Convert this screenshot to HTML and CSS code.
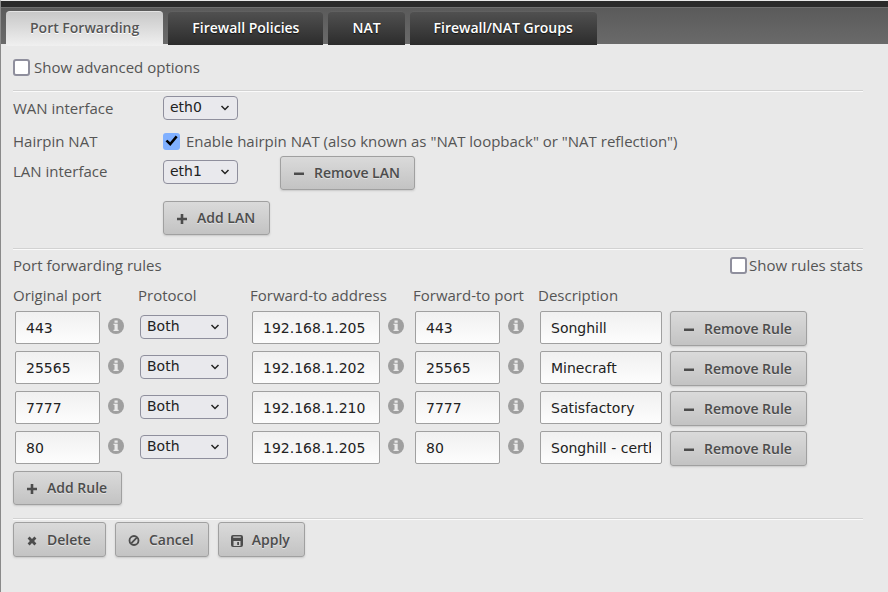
FILE: index.html
```
<!DOCTYPE html>
<html lang="en">
<head>
<meta charset="utf-8">
<title>Port Forwarding</title>
<link rel="stylesheet" href="styles.css">
</head>
<body>
<svg class="sprite" aria-hidden="true">
  <symbol id="minus" viewBox="0 0 12 12"><path d="M1 4.500h10v2.500H1z"/></symbol>
  <symbol id="plus" viewBox="0 0 12 12"><path d="M4.700 1h2.600v3.700H11v2.600H7.300V11H4.700V7.300H1V4.700h3.700z"/></symbol>
  <symbol id="cross" viewBox="0 0 12 12"><path d="M1.600 3.400 3.600 1.500 6 3.900l2.400-2.400 2 1.900L8.100 6l2.300 2.600-2 1.900L6 8.100l-2.400 2.400-2-1.900L3.900 6z"/></symbol>
  <symbol id="ban" viewBox="0 0 12 12"><circle cx="6" cy="5.500" r="4.500" fill="none" stroke="currentColor" stroke-width="1.800"/><path d="M3.200 8.300l5.600-5.600" stroke="currentColor" stroke-width="1.800"/></symbol>
  <symbol id="disk" viewBox="0 0 12 12"><path fill-rule="evenodd" d="M2 0h8q2 0 2 2v8q0 2-2 2H2q-2 0-2-2V2Q0 0 2 0zM2.200 1.500v1.200h7.600V1.500zM2.500 6v5h7V6zM6.200 7h1.800v3H6.200z"/></symbol>
  <symbol id="info" viewBox="0 0 16 16"><circle cx="8" cy="8" r="8" fill="#9f9f9f"/><path fill="#e9e9e9" d="M6.500 2.500h3.200v2.200H6.500zM5.500 5.700h4.200v6h1v1.300H5.500v-1.300h1V7h-1z"/></symbol>
  <symbol id="chevron" viewBox="0 0 10 10"><path d="M1.500 3 5 6.500 8.500 3" fill="none" stroke="#222" stroke-width="1.500"/></symbol>
</svg>
<header class="topbar">
  <nav class="tabs">
    <a class="tab active" href="#forwarding">Port Forwarding</a>
    <a class="tab" href="#policies">Firewall Policies</a>
    <a class="tab" href="#nat">NAT</a>
    <a class="tab" href="#groups">Firewall/NAT Groups</a>
  </nav>
</header>
<main class="content" id="forwarding">
  <section class="section options">
    <label class="check"><input type="checkbox">Show advanced options</label>
  </section>
  <section class="section interfaces">
    <label for="wan">WAN interface</label>
    <div><span class="select short"><select id="wan"><option>eth0</option></select><svg><use href="#chevron"/></svg></span></div>
    <span class="hairpin">Hairpin NAT</span>
    <label class="check spaced hairpin"><input type="checkbox" checked>Enable hairpin NAT (also known as "NAT loopback" or "NAT reflection")</label>
    <label class="lan-label" for="lan">LAN interface</label>
    <div class="lan">
      <span class="select short"><select id="lan"><option>eth1</option></select><svg><use href="#chevron"/></svg></span>
      <button class="button" type="button"><svg><use href="#minus"/></svg>Remove LAN</button>
    </div>
    <div class="add-lan"><button class="button" type="button"><svg><use href="#plus"/></svg>Add LAN</button></div>
  </section>
  <section class="section rules">
    <div class="rules-head">
      <span>Port forwarding rules</span>
      <label class="check"><input type="checkbox">Show rules stats</label>
    </div>
    <table>
      <colgroup><col class="col-port"><col class="col-protocol"><col class="col-address"><col class="col-port"><col class="col-description"><col class="col-action"></colgroup>
      <thead>
        <tr><th>Original port</th><th>Protocol</th><th>Forward-to address</th><th>Forward-to port</th><th>Description</th><td></td></tr>
      </thead>
      <tbody>
        <tr>
          <td><div class="field"><input class="port" aria-label="Original port" value="443"><svg><use href="#info"/></svg></div></td>
          <td><div class="field"><span class="select"><select aria-label="Protocol"><option>Both</option></select><svg><use href="#chevron"/></svg></span></div></td>
          <td><div class="field"><input class="address" aria-label="Forward-to address" value="192.168.1.205"><svg><use href="#info"/></svg></div></td>
          <td><div class="field"><input class="port" aria-label="Forward-to port" value="443"><svg><use href="#info"/></svg></div></td>
          <td><div class="field"><input class="description" aria-label="Description" value="Songhill"></div></td>
          <td><div class="field"><button class="button" type="button"><svg><use href="#minus"/></svg>Remove Rule</button></div></td>
        </tr>
        <tr>
          <td><div class="field"><input class="port" aria-label="Original port" value="25565"><svg><use href="#info"/></svg></div></td>
          <td><div class="field"><span class="select"><select aria-label="Protocol"><option>Both</option></select><svg><use href="#chevron"/></svg></span></div></td>
          <td><div class="field"><input class="address" aria-label="Forward-to address" value="192.168.1.202"><svg><use href="#info"/></svg></div></td>
          <td><div class="field"><input class="port" aria-label="Forward-to port" value="25565"><svg><use href="#info"/></svg></div></td>
          <td><div class="field"><input class="description" aria-label="Description" value="Minecraft"></div></td>
          <td><div class="field"><button class="button" type="button"><svg><use href="#minus"/></svg>Remove Rule</button></div></td>
        </tr>
        <tr>
          <td><div class="field"><input class="port" aria-label="Original port" value="7777"><svg><use href="#info"/></svg></div></td>
          <td><div class="field"><span class="select"><select aria-label="Protocol"><option>Both</option></select><svg><use href="#chevron"/></svg></span></div></td>
          <td><div class="field"><input class="address" aria-label="Forward-to address" value="192.168.1.210"><svg><use href="#info"/></svg></div></td>
          <td><div class="field"><input class="port" aria-label="Forward-to port" value="7777"><svg><use href="#info"/></svg></div></td>
          <td><div class="field"><input class="description" aria-label="Description" value="Satisfactory"></div></td>
          <td><div class="field"><button class="button" type="button"><svg><use href="#minus"/></svg>Remove Rule</button></div></td>
        </tr>
        <tr>
          <td><div class="field"><input class="port" aria-label="Original port" value="80"><svg><use href="#info"/></svg></div></td>
          <td><div class="field"><span class="select"><select aria-label="Protocol"><option>Both</option></select><svg><use href="#chevron"/></svg></span></div></td>
          <td><div class="field"><input class="address" aria-label="Forward-to address" value="192.168.1.205"><svg><use href="#info"/></svg></div></td>
          <td><div class="field"><input class="port" aria-label="Forward-to port" value="80"><svg><use href="#info"/></svg></div></td>
          <td><div class="field"><input class="description" aria-label="Description" value="Songhill - certbot"></div></td>
          <td><div class="field"><button class="button" type="button"><svg><use href="#minus"/></svg>Remove Rule</button></div></td>
        </tr>
      </tbody>
    </table>
    <button class="button" type="button"><svg><use href="#plus"/></svg>Add Rule</button>
  </section>
  <footer class="actions">
    <button class="button" type="button"><svg><use href="#cross"/></svg>Delete</button>
    <button class="button" type="button"><svg><use href="#ban"/></svg>Cancel</button>
    <button class="button" type="button"><svg><use href="#disk"/></svg>Apply</button>
  </footer>
</main>
</body>
</html>
```
FILE: styles.css
```
* { box-sizing: border-box; }

body {
  margin: 0;
  min-height: 100vh;
  border-top: 1px solid #e9e9e9;
  border-left: 1px solid #8a8a8a;
  background: #e9e9e9;
  color: #555;
  font: 15px/20px "Open Sans", sans-serif;
}

.sprite { display: none; }

.topbar {
  border-top: 6px solid #2a2a2a;
  background: linear-gradient(#5a5a5a, #6a6a6a);
  box-shadow: inset 0 1px #707070;
}

.tabs {
  display: flex;
  align-items: flex-start;
  gap: 5px;
  height: 37px;
  padding: 4px 5px 0;
}

.tab {
  height: 34px;
  padding: 0 24px;
  border-top: 1px solid #606060;
  border-radius: 4px 4px 0 0;
  background: linear-gradient(#505050, #2c2c2c);
  color: #fff;
  font-size: 14px;
  font-weight: 600;
  line-height: 32px;
  text-decoration: none;
  text-shadow: 0 1px 1px #111;
}

.tab.active {
  height: 35px;
  border-top-color: #e4e4e4;
  background: linear-gradient(#c8c8c8, #f0f0f0);
  color: #555;
  text-shadow: 0 1px #fff;
}

.content { padding: 0 25px 0 12px; }

.section {
  border-bottom: 1px solid #d2d2d2;
  box-shadow: 0 1px #fafafa;
}

.options { padding: 13px 0; }

.check {
  display: flex;
  align-items: center;
  gap: 4px;
}

.check.spaced { gap: 6px; }

input[type="checkbox"] {
  appearance: none;
  width: 17px;
  height: 17px;
  margin: 0;
  border: 2px solid #8f8f9d;
  border-radius: 3px;
  background: #fff;
}

input[type="checkbox"]:checked {
  border: 0;
  background: #80b0ff;
}

input[type="checkbox"]:checked::before {
  content: "";
  display: block;
  width: 17px;
  height: 17px;
  background: #000;
  clip-path: polygon(15% 52%, 26% 42%, 42% 57%, 75% 18%, 86% 28%, 43% 80%);
}

.interfaces {
  display: grid;
  grid-template-columns: 150px 1fr;
  padding: 5px 0 13px;
  line-height: 24px;
}

.hairpin {
  height: 36px;
  padding-top: 11px;
  line-height: 20px;
}

.check.hairpin { padding: 6px 0 0; }

.lan-label { padding-top: 3px; }

.lan {
  display: flex;
  align-items: flex-start;
  gap: 42px;
}

.lan .select { margin-top: 4px; }

.add-lan {
  display: flex;
  grid-column: 2;
  padding-top: 11px;
}

.select {
  display: grid;
  align-items: center;
  width: 88px;
}

.select.short { width: 75px; }

.select > * { grid-area: 1 / 1; }

.select select {
  appearance: none;
  width: 100%;
  height: 24px;
  padding: 0 6px 2px;
  border: 1px solid #8f8f9d;
  border-radius: 4px;
  background: #e9e9ed;
  color: #222;
  font: 14px/20px "DejaVu Sans", sans-serif;
}

.select svg {
  justify-self: end;
  width: 10px;
  height: 10px;
  margin-right: 8px;
  pointer-events: none;
}

.button {
  display: flex;
  align-items: center;
  gap: 9px;
  height: 34px;
  padding: 0 14px 0 12px;
  border: 1px solid #a0a0a0;
  border-radius: 3px;
  background: linear-gradient(#dadada, #c3c3c3);
  box-shadow: 0 1px 2px #c8c8c8;
  color: #4c4c4c;
  font: 600 14px/20px "Open Sans", sans-serif;
  text-shadow: 0 1px #e4e4e4;
  white-space: nowrap;
}

.field .button,
.actions .button { height: 35px; }

.button svg {
  width: 12px;
  height: 12px;
  margin-top: 2px;
  fill: currentColor;
}

.rules { padding: 6px 0 13px; }

.rules-head {
  display: flex;
  justify-content: space-between;
}

.rules-head .check { gap: 2px; }

table {
  table-layout: fixed;
  width: 792px;
  margin: 10px 0 1px;
  border-collapse: collapse;
}

.col-port { width: 125px; }
.col-protocol { width: 112px; }
.col-address { width: 163px; }
.col-description { width: 130px; }
.col-action { width: 137px; }

th, td { padding: 0; }

th {
  height: 25px;
  font-weight: 400;
  text-align: left;
  vertical-align: top;
  white-space: nowrap;
}

.field {
  display: flex;
  align-items: flex-start;
  gap: 8px;
  height: 40px;
  padding: 1px 0 0 2px;
}

.field > input {
  height: 33px;
  padding: 0 10px;
  border: 1px solid #a0a0a0;
  border-radius: 2px;
  background: linear-gradient(#f0f0f0, #fdfdfd);
  color: #222;
  font: 14px/20px "DejaVu Sans", sans-serif;
}

.field > svg {
  width: 16px;
  height: 16px;
  margin-top: 7px;
}

.field .select { margin-top: 4px; }

.port { width: 85px; }
.address { width: 128px; }
.description { width: 122px; }

.actions {
  display: flex;
  gap: 9px;
  padding: 3px 0 20px;
}
```
